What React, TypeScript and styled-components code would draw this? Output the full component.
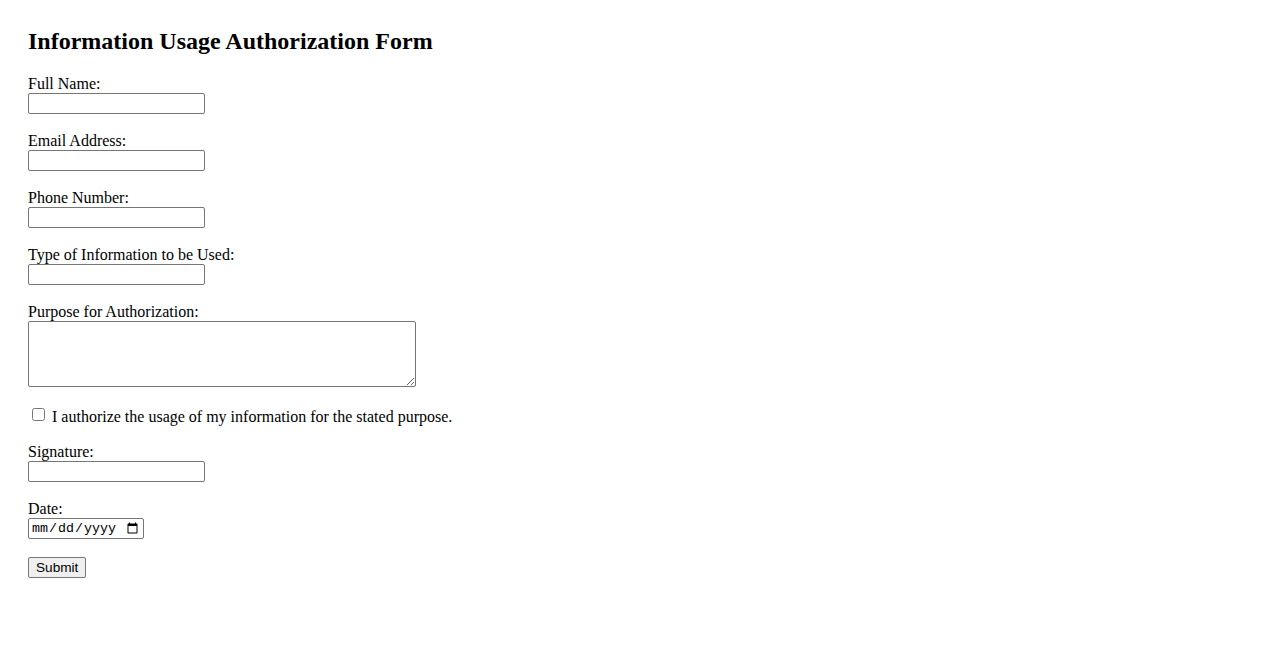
import styled, { createGlobalStyle } from "styled-components";

const GlobalStyle = createGlobalStyle`
  body {
    margin: 0;
    background: #ffffff;
    color: #000000;
    font-family: "Liberation Serif", "Times New Roman", serif;
    font-size: 16px;
  }
`;

const Page = styled.div`
  padding: 28px 28px;
`;

const Title = styled.h2`
  margin: 0 0 20px;
  font-size: 24px;
  line-height: 27px;
  font-weight: bold;
`;

const Form = styled.form`
  display: flex;
  flex-direction: column;
  align-items: flex-start;
`;

const Field = styled.div`
  display: flex;
  flex-direction: column;
  align-items: flex-start;
  margin-bottom: 18px;
`;

const Label = styled.label`
  display: block;
  line-height: 18.5px;
  height: 18px;
`;

const TextInput = styled.input<{ $width?: number }>`
  box-sizing: border-box;
  width: ${(p) => p.$width ?? 177}px;
  height: 21px;
  margin: 0;
  padding: 1px 2px;
  border: 1px solid #767676;
  border-radius: 2px;
  font-family: "Liberation Sans", Arial, sans-serif;
  font-size: 13.33px;
`;

const DateInput = styled(TextInput)`
  font-family: "Liberation Mono", "DejaVu Sans Mono", monospace;
  font-size: 13.33px;
`;

const TextArea = styled.textarea`
  box-sizing: border-box;
  width: 388px;
  height: 66px;
  margin: 0;
  padding: 2px;
  border: 1px solid #767676;
  border-radius: 2px;
  font-family: "Liberation Mono", monospace;
  font-size: 13.33px;
`;

const CheckRow = styled.div`
  display: flex;
  align-items: center;
  height: 19px;
  margin-bottom: 19px;
  line-height: 18px;
`;

const CheckBox = styled.input`
  width: 13px;
  height: 13px;
  margin: 3px 7px 3px 4px;
`;

const CheckLabel = styled.label`
  margin-top: 4px;
`;

const SubmitButton = styled.button`
  box-sizing: border-box;
  height: 21px;
  padding: 1px 7px;
  border: 1px solid #767676;
  border-radius: 2px;
  background: #efefef;
  color: #000000;
  font-family: "Liberation Sans", Arial, sans-serif;
  font-size: 13.6px;
`;

const fields = [
  { id: "fullName", label: "Full Name:", type: "text" },
  { id: "email", label: "Email Address:", type: "email" },
  { id: "phone", label: "Phone Number:", type: "tel" },
  { id: "infoType", label: "Type of Information to be Used:", type: "text" },
];

export default function App() {
  return (
    <Page>
      <GlobalStyle />
      <Title>Information Usage Authorization Form</Title>
      <Form onSubmit={(event) => event.preventDefault()}>
        {fields.map((f) => (
          <Field key={f.id}>
            <Label htmlFor={f.id}>{f.label}</Label>
            <TextInput id={f.id} type={f.type} />
          </Field>
        ))}
        <Field>
          <Label htmlFor="purpose">Purpose for Authorization:</Label>
          <TextArea id="purpose" />
        </Field>
        <CheckRow>
          <CheckBox type="checkbox" id="consent" />
          <CheckLabel htmlFor="consent">
            I authorize the usage of my information for the stated purpose.
          </CheckLabel>
        </CheckRow>
        <Field>
          <Label htmlFor="signature">Signature:</Label>
          <TextInput id="signature" type="text" />
        </Field>
        <Field>
          <Label htmlFor="date">Date:</Label>
          <DateInput id="date" type="date" $width={116} />
        </Field>
        <SubmitButton type="submit">Submit</SubmitButton>
      </Form>
    </Page>
  );
}
